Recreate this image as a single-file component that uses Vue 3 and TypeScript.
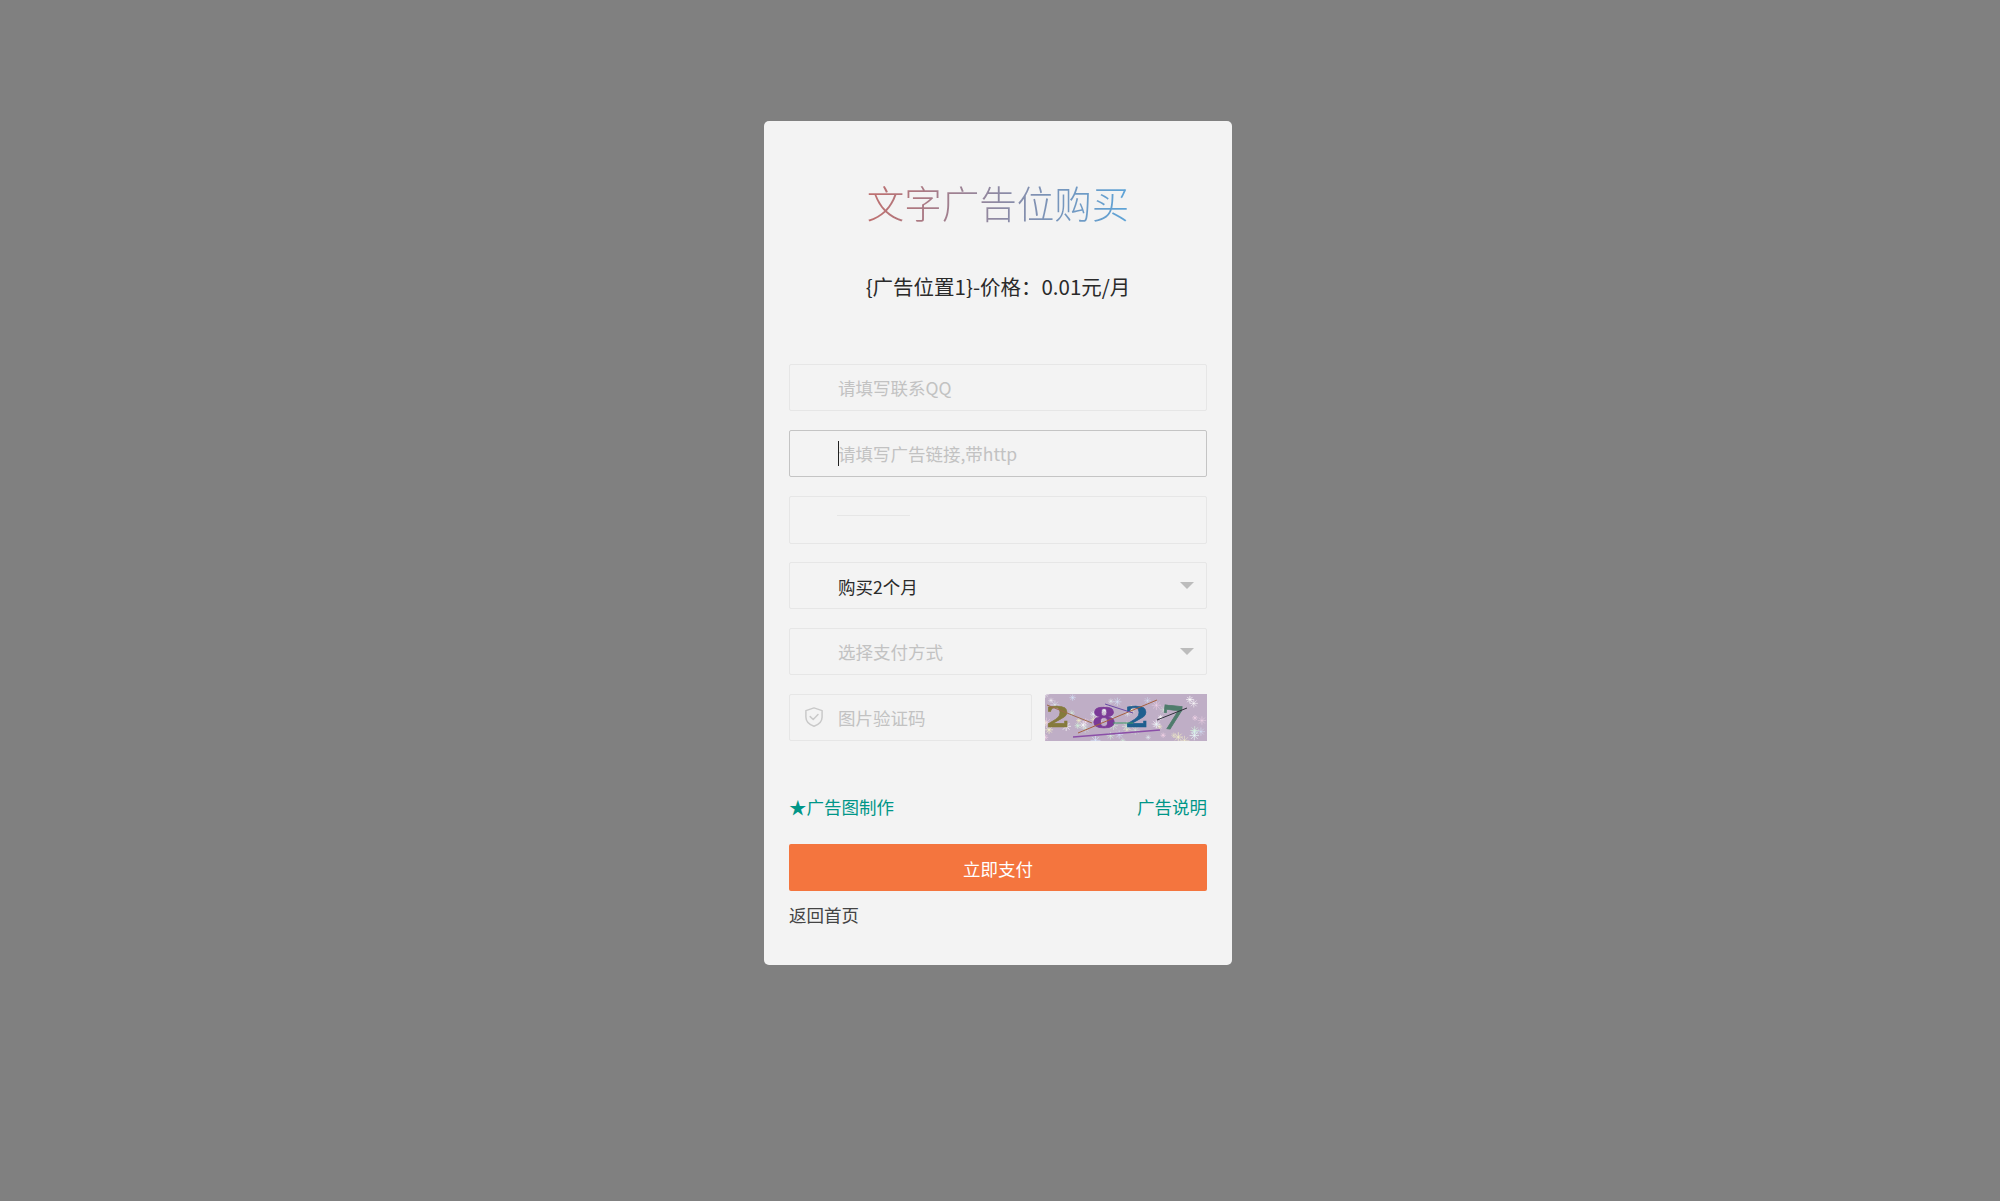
<script setup lang="ts">
interface Flake { x: number; y: number; r: number; c: string; o: number }
const palette = ['#ffffff', '#f7d6ea', '#d4f2dc', '#d6e6fb', '#f3f0c8', '#e9f7f7']
let seed = 7
const rnd = (): number => {
  seed = (seed * 16807) % 2147483647
  return seed / 2147483647
}
const flakes: Flake[] = Array.from({ length: 54 }, () => ({
  x: rnd() * 162,
  y: rnd() * 47,
  r: 2.5 + rnd() * 2.5,
  c: palette[Math.floor(rnd() * palette.length)],
  o: 0.4 + rnd() * 0.4,
}))
const arm = (f: Flake): string => {
  const d = f.r * 0.7
  return `M${f.x - f.r} ${f.y}H${f.x + f.r}M${f.x} ${f.y - f.r}V${f.y + f.r}M${f.x - d} ${f.y - d}L${f.x + d} ${f.y + d}M${f.x - d} ${f.y + d}L${f.x + d} ${f.y - d}`
}
</script>

<template>
  <div class="page">
    <main class="card">
      <h1 class="title">文字广告位购买</h1>
      <p class="sub">{广告位置1}-价格：0.01元/月</p>

      <form class="fields" @submit.prevent>
        <div class="field"><span class="ph">请填写联系QQ</span></div>
        <div class="field focus"><i class="caret"></i><span class="ph">请填写广告链接,带http</span></div>
        <div class="field empty"><i class="hairline"></i></div>
        <div class="field"><span class="val">购买2个月</span><i class="arrow"></i></div>
        <div class="field"><span class="ph">选择支付方式</span><i class="arrow"></i></div>
        <div class="captcha-row">
          <div class="field code">
            <svg class="shield" viewBox="0 0 18 20" width="18" height="20" fill="none">
              <path d="M9 0.9 L17.1 3.6 V10 C17.1 14.8 13.2 17.8 9 19.2 C4.8 17.8 0.9 14.8 0.9 10 V3.6 Z" stroke="#c9c9c9" stroke-width="1.5" stroke-linejoin="round" />
              <path d="M5.2 9.6 L8.2 12.5 L13 7.6" stroke="#c9c9c9" stroke-width="1.5" stroke-linecap="round" stroke-linejoin="round" />
            </svg>
            <span class="ph">图片验证码</span>
          </div>
          <svg class="captcha" viewBox="0 0 162 47" width="162" height="47">
            <rect width="162" height="47" fill="#bfaec6" />
            <path v-for="(f, i) in flakes" :key="i" :d="arm(f)" :stroke="f.c" :stroke-opacity="f.o" stroke-width="0.9" fill="none" />
            <g class="digits" stroke-width="0.7">
              <text transform="translate(1 33) scale(1.05 0.85)" font-size="33" fill="#857a3c" stroke="#857a3c">2</text>
              <text transform="translate(47 34) scale(1.05 0.85)" font-size="33" fill="#7b3a97" stroke="#7b3a97">8</text>
              <text transform="translate(80 33) scale(1.05 0.85)" font-size="33" fill="#1f5f8f" stroke="#1f5f8f">2</text>
              <text transform="translate(115 34) rotate(6) scale(0.98 0.98)" font-size="33" fill="#4f7c6c" stroke="#4f7c6c">7</text>
            </g>
            <g fill="none" stroke-width="1">
              <path d="M2 11L47 29" stroke="#9d6a4b" />
              <path d="M33 39L112 6" stroke="#a5603f" />
              <path d="M60 10L88 19" stroke="#6a4aa5" />
              <path d="M28 43L115 36" stroke="#8b4fa8" stroke-width="1.6" />
              <path d="M112 26L142 14" stroke="#2f2f3a" />
              <path d="M68 29L88 29" stroke="#3f9a66" />
            </g>
          </svg>
        </div>
      </form>

      <div class="links">
        <a class="link">★广告图制作</a>
        <a class="link">广告说明</a>
      </div>
      <button class="pay" type="button">立即支付</button>
      <a class="back">返回首页</a>
    </main>
  </div>
</template>

<style scoped>
.page {
  min-height: 100vh;
  box-sizing: border-box;
  background: #808080;
  display: flex;
  justify-content: center;
  align-items: flex-start;
  padding: 121px 4px 0 0;
  font-family: "Noto Sans CJK SC", "Liberation Sans", sans-serif;
  font-size: 17.5px;
}
.card {
  width: 468px;
  box-sizing: border-box;
  background: #f3f3f3;
  border-radius: 5px;
  padding: 56px 25px 37px;
  display: flex;
  flex-direction: column;
}
.title {
  margin: 0;
  text-align: center;
  font-size: 37.5px;
  line-height: 50px;
  font-weight: 300;
  background: linear-gradient(90deg, #bd7070 20%, #5fa3d6 80%);
  -webkit-background-clip: text;
  background-clip: text;
  color: transparent;
}
.sub {
  margin: 44px 0 0;
  text-align: center;
  font-size: 20.5px;
  line-height: 30px;
  color: #2a2a2a;
}
.fields {
  margin-top: 63px;
  display: flex;
  flex-direction: column;
  gap: 19px;
}
.field {
  position: relative;
  height: 47px;
  box-sizing: border-box;
  border: 1px solid #e6e6e6;
  border-radius: 2px;
  padding-left: 48px;
  display: flex;
  align-items: center;
  line-height: 1;
}
.empty {
  height: 48px;
  margin-bottom: -1px;
}
.focus {
  border-color: #c4c4c4;
}
.ph {
  color: #c2c2c2;
}
.val {
  color: #2b2b2b;
  padding-top: 2px;
}
.caret {
  position: absolute;
  left: 48px;
  top: 10px;
  width: 1px;
  height: 25px;
  background: #222;
}
.hairline {
  position: absolute;
  left: 47px;
  top: 18px;
  width: 73px;
  height: 1px;
  background: #e6e6e6;
}
.arrow {
  position: absolute;
  right: 12px;
  top: 19px;
  width: 0;
  height: 0;
  border-style: solid;
  border-width: 7px 7px 0;
  border-color: #bcbcbc transparent transparent;
}
.captcha-row {
  display: flex;
  justify-content: space-between;
  align-items: stretch;
}
.code {
  width: 243px;
}
.shield {
  position: absolute;
  left: 15px;
  top: 12px;
}
.captcha {
  display: block;
  width: 162px;
  height: 47px;
  filter: blur(0.45px);
}
.digits {
  font-family: "DejaVu Serif", "Liberation Serif", serif;
  font-weight: 700;
}
.links {
  margin-top: 53px;
  display: flex;
  justify-content: space-between;
  line-height: 26px;
}
.link {
  color: #009688;
}
.pay {
  margin-top: 24px;
  height: 47px;
  border: 0;
  border-radius: 2px;
  background: #f4753e;
  color: #fff;
  font: inherit;
  padding: 1px 0 0;
}
.back {
  margin-top: 11px;
  line-height: 26px;
  color: #444;
}
</style>

<style>
html, body {
  background: #808080;
}
</style>
